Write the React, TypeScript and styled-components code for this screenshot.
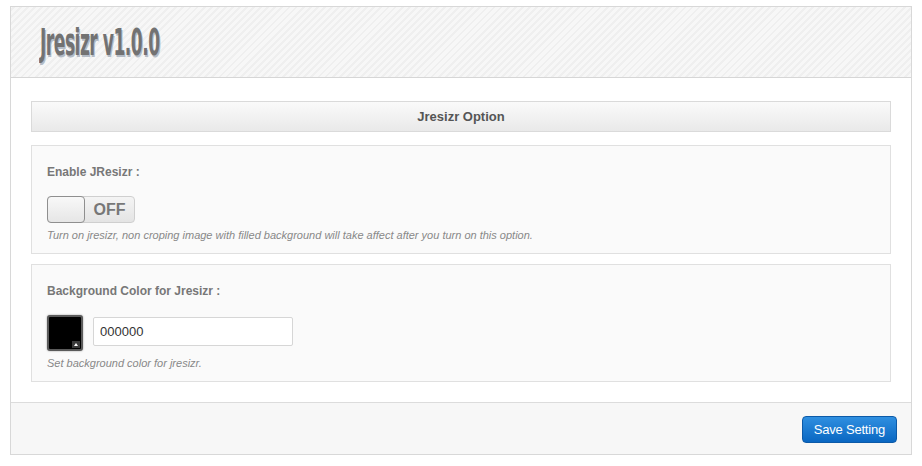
import React from "react";
import styled, { createGlobalStyle } from "styled-components";

const GlobalStyle = createGlobalStyle`
  html, body {
    margin: 0;
    padding: 0;
    background: #ffffff;
    font-family: "Liberation Sans", Arial, sans-serif;
  }
`;

const Page = styled.div`
  padding: 6px 10px 10px 10px;
`;

const Frame = styled.div`
  border: 1px solid #d8d8d8;
  background: #fff;
`;

const Header = styled.header`
  height: 70px;
  display: flex;
  align-items: center;
  padding-left: 29px;
  border-bottom: 1px solid #d6d6d6;
  background: repeating-linear-gradient(
    -45deg,
    #f7f7f7 0px,
    #f7f7f7 3px,
    #efefef 3px,
    #efefef 5px
  );
`;

const Title = styled.h1`
  margin: 0;
  font-family: "Liberation Sans Narrow", "DejaVu Sans Condensed", "Liberation Sans", sans-serif;
  font-weight: bold;
  font-size: 38px;
  letter-spacing: -1px;
  color: #727272;
  text-shadow: 2px 2px 0 #b4bcc6;
  transform: scaleX(0.5);
  transform-origin: left center;
  white-space: nowrap;
`;

const Body = styled.main`
  padding: 23px 20px 20px 20px;
  display: flex;
  flex-direction: column;
  gap: 10px;
`;

const SectionBar = styled.div`
  height: 29px;
  border: 1px solid #dadada;
  background: linear-gradient(#fafafa, #e9e9e9);
  display: flex;
  align-items: center;
  justify-content: center;
  font-size: 13px;
  font-weight: bold;
  color: #555;
  margin-bottom: 3px;
`;

const Card = styled.section`
  border: 1px solid #e0e0e0;
  background: #fafafa;
  padding: 19px 15px 12px 15px;
  display: flex;
  flex-direction: column;
`;

const Label = styled.div`
  font-size: 12px;
  font-weight: bold;
  color: #777;
  margin-bottom: 17px;
`;

const Help = styled.div`
  font-size: 11px;
  font-style: italic;
  color: #888;
  margin-top: 6px;
`;

const Toggle = styled.div`
  width: 86px;
  height: 25px;
  border: 1px solid #cfcfcf;
  border-radius: 4px;
  background: linear-gradient(#f4f4f4, #e4e4e4);
  display: flex;
  align-items: stretch;
`;

const Knob = styled.div`
  width: 36px;
  margin: -1px 0 -1px -1px;
  border: 1px solid #8f8f8f;
  border-radius: 4px;
  background: linear-gradient(#f8f8f8, #e6e6e6);
`;

const ToggleText = styled.span`
  flex: 1;
  display: flex;
  align-items: center;
  justify-content: center;
  font-size: 16px;
  font-weight: bold;
  color: #777;
`;

const ColorRow = styled.div`
  display: flex;
  align-items: flex-start;
  gap: 10px;
`;

const Swatch = styled.div<{ $color: string }>`
  position: relative;
  width: 32px;
  height: 32px;
  border: 2px solid #5a5a5a;
  border-radius: 3px;
  background: ${(p) => p.$color};
  box-shadow: 0 0 2px rgba(0, 0, 0, 0.4);
`;

const SwatchArrow = styled.span`
  position: absolute;
  right: 1px;
  bottom: 1px;
  width: 8px;
  height: 7px;
  background: #3a3a3a;
  &::after {
    content: "";
    position: absolute;
    left: 2px;
    top: 2px;
    border-left: 2px solid transparent;
    border-right: 2px solid transparent;
    border-bottom: 3px solid #fff;
  }
`;

const TextInput = styled.input`
  width: 200px;
  height: 29px;
  margin-top: 2px;
  box-sizing: border-box;
  border: 1px solid #d6d6d6;
  border-radius: 2px;
  background: #fff;
  padding: 0 6px;
  font-family: "Liberation Sans", Arial, sans-serif;
  font-size: 13px;
  color: #333;
  outline: none;
`;

const Footer = styled.footer`
  border-top: 1px solid #dcdcdc;
  background: #f7f7f7;
  height: 52px;
  box-sizing: border-box;
  display: flex;
  align-items: flex-start;
  justify-content: flex-end;
  padding: 13px 14px 0 0;
`;

const Button = styled.button`
  height: 27px;
  padding: 0 11px;
  border: 1px solid #0c5aa8;
  border-radius: 4px;
  background: linear-gradient(#2f8fe0, #0a67c2);
  color: #fff;
  font-family: "Liberation Sans", Arial, sans-serif;
  font-size: 13px;
  letter-spacing: -0.2px;
  cursor: pointer;
`;

const App: React.FC = () => {
  return (
    <Page>
      <GlobalStyle />
      <Frame>
        <Header>
          <Title>Jresizr v1.0.0</Title>
        </Header>
        <Body>
          <SectionBar>Jresizr Option</SectionBar>
          <Card>
            <Label>Enable JResizr :</Label>
            <Toggle>
              <Knob />
              <ToggleText>OFF</ToggleText>
            </Toggle>
            <Help>
              Turn on jresizr, non croping image with filled background will take affect after you turn on this option.
            </Help>
          </Card>
          <Card>
            <Label>Background Color for Jresizr :</Label>
            <ColorRow>
              <Swatch $color="#000000">
                <SwatchArrow />
              </Swatch>
              <TextInput defaultValue="000000" />
            </ColorRow>
            <Help>Set background color for jresizr.</Help>
          </Card>
        </Body>
        <Footer>
          <Button>Save Setting</Button>
        </Footer>
      </Frame>
    </Page>
  );
};

export default App;
